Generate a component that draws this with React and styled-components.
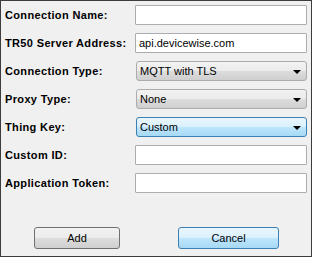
import React from 'react'
import styled, { createGlobalStyle } from 'styled-components'

const GlobalStyle = createGlobalStyle`
    html, body {
        margin: 0;
        padding: 0;
        background: #f0f0f0;
    }
    * {
        box-sizing: border-box;
    }
`

const fields = [
    { label: 'Connection Name:', kind: 'input', value: '' },
    { label: 'TR50 Server Address:', kind: 'input', value: 'api.devicewise.com' },
    { label: 'Connection Type:', kind: 'select', value: 'MQTT with TLS' },
    { label: 'Proxy Type:', kind: 'select', value: 'None' },
    { label: 'Thing Key:', kind: 'select', value: 'Custom', hover: true },
    { label: 'Custom ID:', kind: 'input', value: '' },
    { label: 'Application Token:', kind: 'input', value: '' },
]

const App = () => {
    return (
        <Window>
            <GlobalStyle />
            <Form>
                {fields.map((f) => (
                    <React.Fragment key={f.label}>
                        <Label>{f.label}</Label>
                        {f.kind === 'input' ? (
                            <TextBox>{f.value}</TextBox>
                        ) : (
                            <Combo $hover={f.hover}>
                                <span>{f.value}</span>
                                <Arrow />
                            </Combo>
                        )}
                    </React.Fragment>
                ))}
            </Form>
            <ButtonRow>
                <Button $width={86}>Add</Button>
                <Button $width={101} $hover>Cancel</Button>
            </ButtonRow>
        </Window>
    )
}

export default App

const Window = styled.div`
    width: 312px;
    height: 257px;
    border: 1px solid #3c3c3c;
    background: #f0f0f0;
    padding: 4px 5px 0 4px;
    font-family: Tahoma, "Liberation Sans", Arial, sans-serif;
    font-size: 11px;
    color: #000;
`

const Form = styled.div`
    display: grid;
    grid-template-columns: 130px 172px;
    grid-auto-rows: 20px;
    row-gap: 8px;
`

const Label = styled.div`
    font-weight: bold;
    letter-spacing: 0.35px;
    display: flex;
    align-items: center;
    white-space: nowrap;
`

const TextBox = styled.div`
    height: 20px;
    background: #fff;
    border: 1px solid #abadb3;
    border-radius: 1px;
    padding: 0 3px;
    display: flex;
    align-items: center;
`

const Combo = styled.div`
    height: 20px;
    margin-left: 1px;
    border: 1px solid ${(p) => (p.$hover ? '#3c7fb1' : '#acacac')};
    border-radius: 3px;
    background: ${(p) =>
        p.$hover
            ? 'linear-gradient(#eaf6fd 0%, #d9f0fc 50%, #bee6fd 51%, #a7d9f5 100%)'
            : 'linear-gradient(#f2f2f2 0%, #ebebeb 50%, #dddddd 51%, #cfcfcf 100%)'};
    padding: 0 5px 0 3px;
    display: flex;
    align-items: center;
    justify-content: space-between;
`

const Arrow = styled.span`
    width: 0;
    height: 0;
    border-left: 4px solid transparent;
    border-right: 4px solid transparent;
    border-top: 4px solid #000;
    margin-top: 2px;
`

const ButtonRow = styled.div`
    display: flex;
    margin-top: 34px;
    padding-left: 29px;
    gap: 58px;
`

const Button = styled.div`
    width: ${(p) => p.$width}px;
    height: 22px;
    border: 1px solid ${(p) => (p.$hover ? '#3c7fb1' : '#707070')};
    border-radius: 3px;
    background: ${(p) =>
        p.$hover
            ? 'linear-gradient(#eaf6fd 0%, #d9f0fc 50%, #bee6fd 51%, #a7d9f5 100%)'
            : 'linear-gradient(#f2f2f2 0%, #ebebeb 50%, #dddddd 51%, #cfcfcf 100%)'};
    display: flex;
    align-items: center;
    justify-content: center;
`
